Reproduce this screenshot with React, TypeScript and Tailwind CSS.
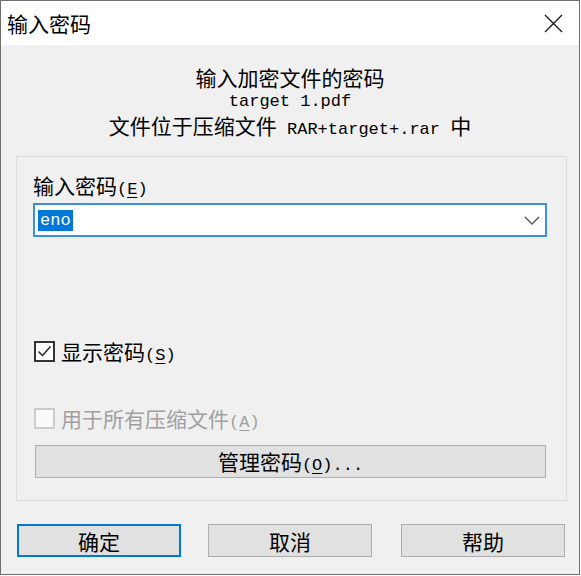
import React from 'react';

const cjk = "font-['Noto_Sans_CJK_SC',sans-serif]";
const mono = "font-['Liberation_Mono','Noto_Sans_CJK_SC',monospace] text-[17px] leading-none";

// "(X)" with the access key underlined, half-width like the Windows font
const Key: React.FC<{ k: string }> = ({ k }) => (
    <span className={mono}>
        (<span className="underline underline-offset-[3px]">{k}</span>)
    </span>
);

const CheckRow: React.FC<{ checked?: boolean; disabled?: boolean; label: string; k: string }> = ({ checked, disabled, label, k }) => (
    <div className={`flex items-center h-[24px] pl-[17px] gap-[6px] ${disabled ? 'text-[#a0a0a0]' : 'text-black'}`}>
        <div className={`w-[21px] h-[21px] border-2 ${disabled ? 'border-[#cccccc] bg-[#fafafa]' : 'border-[#333333] bg-white'} flex items-center justify-center`}>
            {checked && (
                <svg width="17" height="17" viewBox="0 0 17 17">
                    <path d="M2.5 8.5 L6.5 12.5 L14.5 3.5" fill="none" stroke="#333" strokeWidth="1.6" />
                </svg>
            )}
        </div>
        <span className="flex items-baseline">{label}<Key k={k} /></span>
    </div>
);

export default function App() {
    return (
        <div className={`w-[581px] h-[576px] bg-white ${cjk} text-[21px] leading-[24px] text-black`}>
            <div className="w-[580px] h-[575px] border border-[#6e6e6e] bg-[#f0f0f0] flex flex-col">
                {/* title bar */}
                <div className="h-[44px] shrink-0 bg-white flex items-center justify-between pl-[6px] pr-[16px]">
                    <span>输入密码</span>
                    <svg width="19" height="19" viewBox="0 0 19 19">
                        <path d="M1 1 L18 18 M18 1 L1 18" stroke="#111" strokeWidth="1.2" />
                    </svg>
                </div>

                {/* header */}
                <div className="pt-[20px] text-center">
                    <div className="h-[24px]">输入加密文件的密码</div>
                    <div className="h-[24px] flex items-center justify-center">
                        <span className={mono}>target 1.pdf</span>
                    </div>
                    <div className="h-[24px] flex items-baseline justify-center whitespace-pre">
                        <span>文件位于压缩文件</span>
                        <span className={mono}> RAR+target+.rar </span>
                        <span>中</span>
                    </div>
                </div>

                {/* group box */}
                <div className="mt-[19px] ml-[15px] w-[551px] h-[345px] shrink-0 border border-[#dcdcdc] pt-[16px] flex flex-col">
                    <div className="h-[24px] pl-[16px] flex items-baseline">
                        输入密码<Key k="E" />
                    </div>
                    <div className="mt-[6px] ml-[16px] w-[514px] h-[34px] shrink-0 bg-white border-2 border-[#3c8ee0] flex items-center justify-between pl-[3px] pr-[5px]">
                        <span className={`${mono} bg-[#0078d7] text-white px-[2px] py-[2px]`}>eno</span>
                        <svg width="16" height="9" viewBox="0 0 16 9">
                            <path d="M1 1 L8 8 L15 1" fill="none" stroke="#555" strokeWidth="1.4" />
                        </svg>
                    </div>

                    <div className="mt-[102px]">
                        <CheckRow checked label="显示密码" k="S" />
                    </div>
                    <div className="mt-[43px]">
                        <CheckRow disabled label="用于所有压缩文件" k="A" />
                    </div>

                    <div className="mt-[15px] ml-[18px] w-[511px] h-[33px] shrink-0 border border-[#adadad] bg-[#e1e1e1] flex items-center justify-center">
                        <span className="flex items-baseline">管理密码<Key k="O" /><span className={mono}>...</span></span>
                    </div>
                </div>

                {/* buttons */}
                <div className="mt-[23px] pl-[16px] flex">
                    <button className="w-[164px] h-[33px] border-2 border-[#0078d7] bg-[#e1e1e1] leading-[24px]">确定</button>
                    <button className="ml-[27px] w-[164px] h-[33px] border border-[#adadad] bg-[#e1e1e1] leading-[24px]">取消</button>
                    <button className="ml-[29px] w-[164px] h-[33px] border border-[#adadad] bg-[#e1e1e1] leading-[24px]">帮助</button>
                </div>
            </div>
        </div>
    );
}
